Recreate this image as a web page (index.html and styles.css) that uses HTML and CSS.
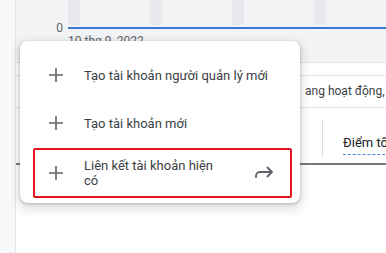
FILE: index.html
```html
<!DOCTYPE html>
<html lang="vi">
<head>
	<meta charset="UTF-8">
	<title>Tài khoản</title>
	<link rel="stylesheet" href="styles.css">
</head>
<body>
	<div class="page">
		<div class="rail"></div>
		<div class="content">
			<div class="chart">
				<div class="plot">
					<div class="bars"><span></span><span></span><span></span><span></span></div>
					<div class="zero-line"><span class="tick">0</span></div>
					<div class="date">10 thg 9, 2022</div>
				</div>
			</div>
			<div class="filter-row"></div>
			<div class="status-row"><div class="status-cell"><span>Đang hoạt động, Tạm dừng</span></div></div>
			<div class="header-row">
				<div class="head-cell"></div>
				<div class="head-cell score"><span>Điểm tối ưu hóa</span></div>
			</div>
		</div>

		<div class="menu">
			<div class="menu-item">
				<svg class="ico" viewBox="0 0 24 24"><path d="M12 5v14M5 12h14"/></svg>
				<span class="label">Tạo tài khoản người quản lý mới</span>
			</div>
			<div class="menu-item">
				<svg class="ico" viewBox="0 0 24 24"><path d="M12 5v14M5 12h14"/></svg>
				<span class="label">Tạo tài khoản mới</span>
			</div>
			<div class="menu-item link">
				<svg class="ico" viewBox="0 0 24 24"><path d="M12 5v14M5 12h14"/></svg>
				<span class="label">Liên kết tài khoản hiện có</span>
				<svg class="ico go" viewBox="0 0 24 24"><path d="M4 17v-2a4 4 0 0 1 4-4h12M15 6l5 5-5 5"/></svg>
			</div>
		</div>
	</div>
</body>
</html>
```

FILE: styles.css
```css
* {margin: 0;padding: 0;box-sizing: border-box}
body {background: #fff;font-family: Roboto, "Liberation Sans", Arial, sans-serif;color: #3c4043}
.page {width: 386px;height: 253px;display: flex;position: relative;overflow: hidden}

.rail {width: 16px;flex: none;background: #f8f9fa;border-right: 1px solid #e3e4e6}
.content {flex: 1;display: flex;flex-direction: column;min-width: 0}

/* chart */
.chart {height: 63px;background: #f1f3f4;border-bottom: 1px solid #dfe1e4;padding-left: 52px}
.plot {position: relative}
.bars {height: 25px;display: flex;gap: 70px}
.bars span {width: 12px;background: #e8e9ec}
.zero-line {height: 2px;margin-top: 2px;background: #3a78d4;position: relative}
.tick {position: absolute;right: 100%;margin-right: 5px;top: -6px;font-size: 12px;line-height: 14px;color: #5f6368}
.date {margin-top: 5px;font-size: 12px;line-height: 14px;color: #5f6368;white-space: nowrap}

/* table bits behind the menu */
.filter-row {height: 13px;border-bottom: 1px solid #e3e4e6}
.status-row {height: 32px;border-bottom: 1px solid #e3e4e6;padding-left: 289px}
.status-cell {height: 31px;overflow: hidden;font-size: 12px;line-height: 31px;white-space: nowrap}
.status-cell span {margin-left: -8px}
.header-row {height: 57px;display: flex;border-bottom: 2px solid #74777b}
.head-cell {width: 306px;flex: none}
.head-cell.score {width: auto;flex: 1;margin: 11px 0 6px;border-left: 1px solid #dadce0;padding: 16px 0 0 20px;font-size: 13px;line-height: 15px;color: #202124;white-space: nowrap;overflow: hidden}
.score span {border-bottom: 1px dashed #4f86e0;padding-bottom: 4px}

/* menu overlay */
.menu {position: absolute;left: 20px;top: 41px;width: 280px;background: #fff;border-radius: 8px;padding: 10px 0 4px;box-shadow: 0 1px 3px rgba(60,64,67,.3), 0 4px 8px 3px rgba(60,64,67,.15)}
.menu-item {height: 48px;display: flex;align-items: center;padding: 0 24px;gap: 16px;font-size: 13px;line-height: 15px}
.ico {width: 24px;height: 24px;flex: none;fill: none;stroke: #5f6368;stroke-width: 1.6}
.menu-item.link {height: 52px;position: relative}
.menu-item.link .label {width: 140px}
.menu-item.link .go {margin-left: auto;stroke-width: 1.8}
.menu-item.link::after {content: "";position: absolute;left: 13px;right: 8px;top: 1px;bottom: 1px;border: 2px solid #e2161e;border-radius: 2px}
```
